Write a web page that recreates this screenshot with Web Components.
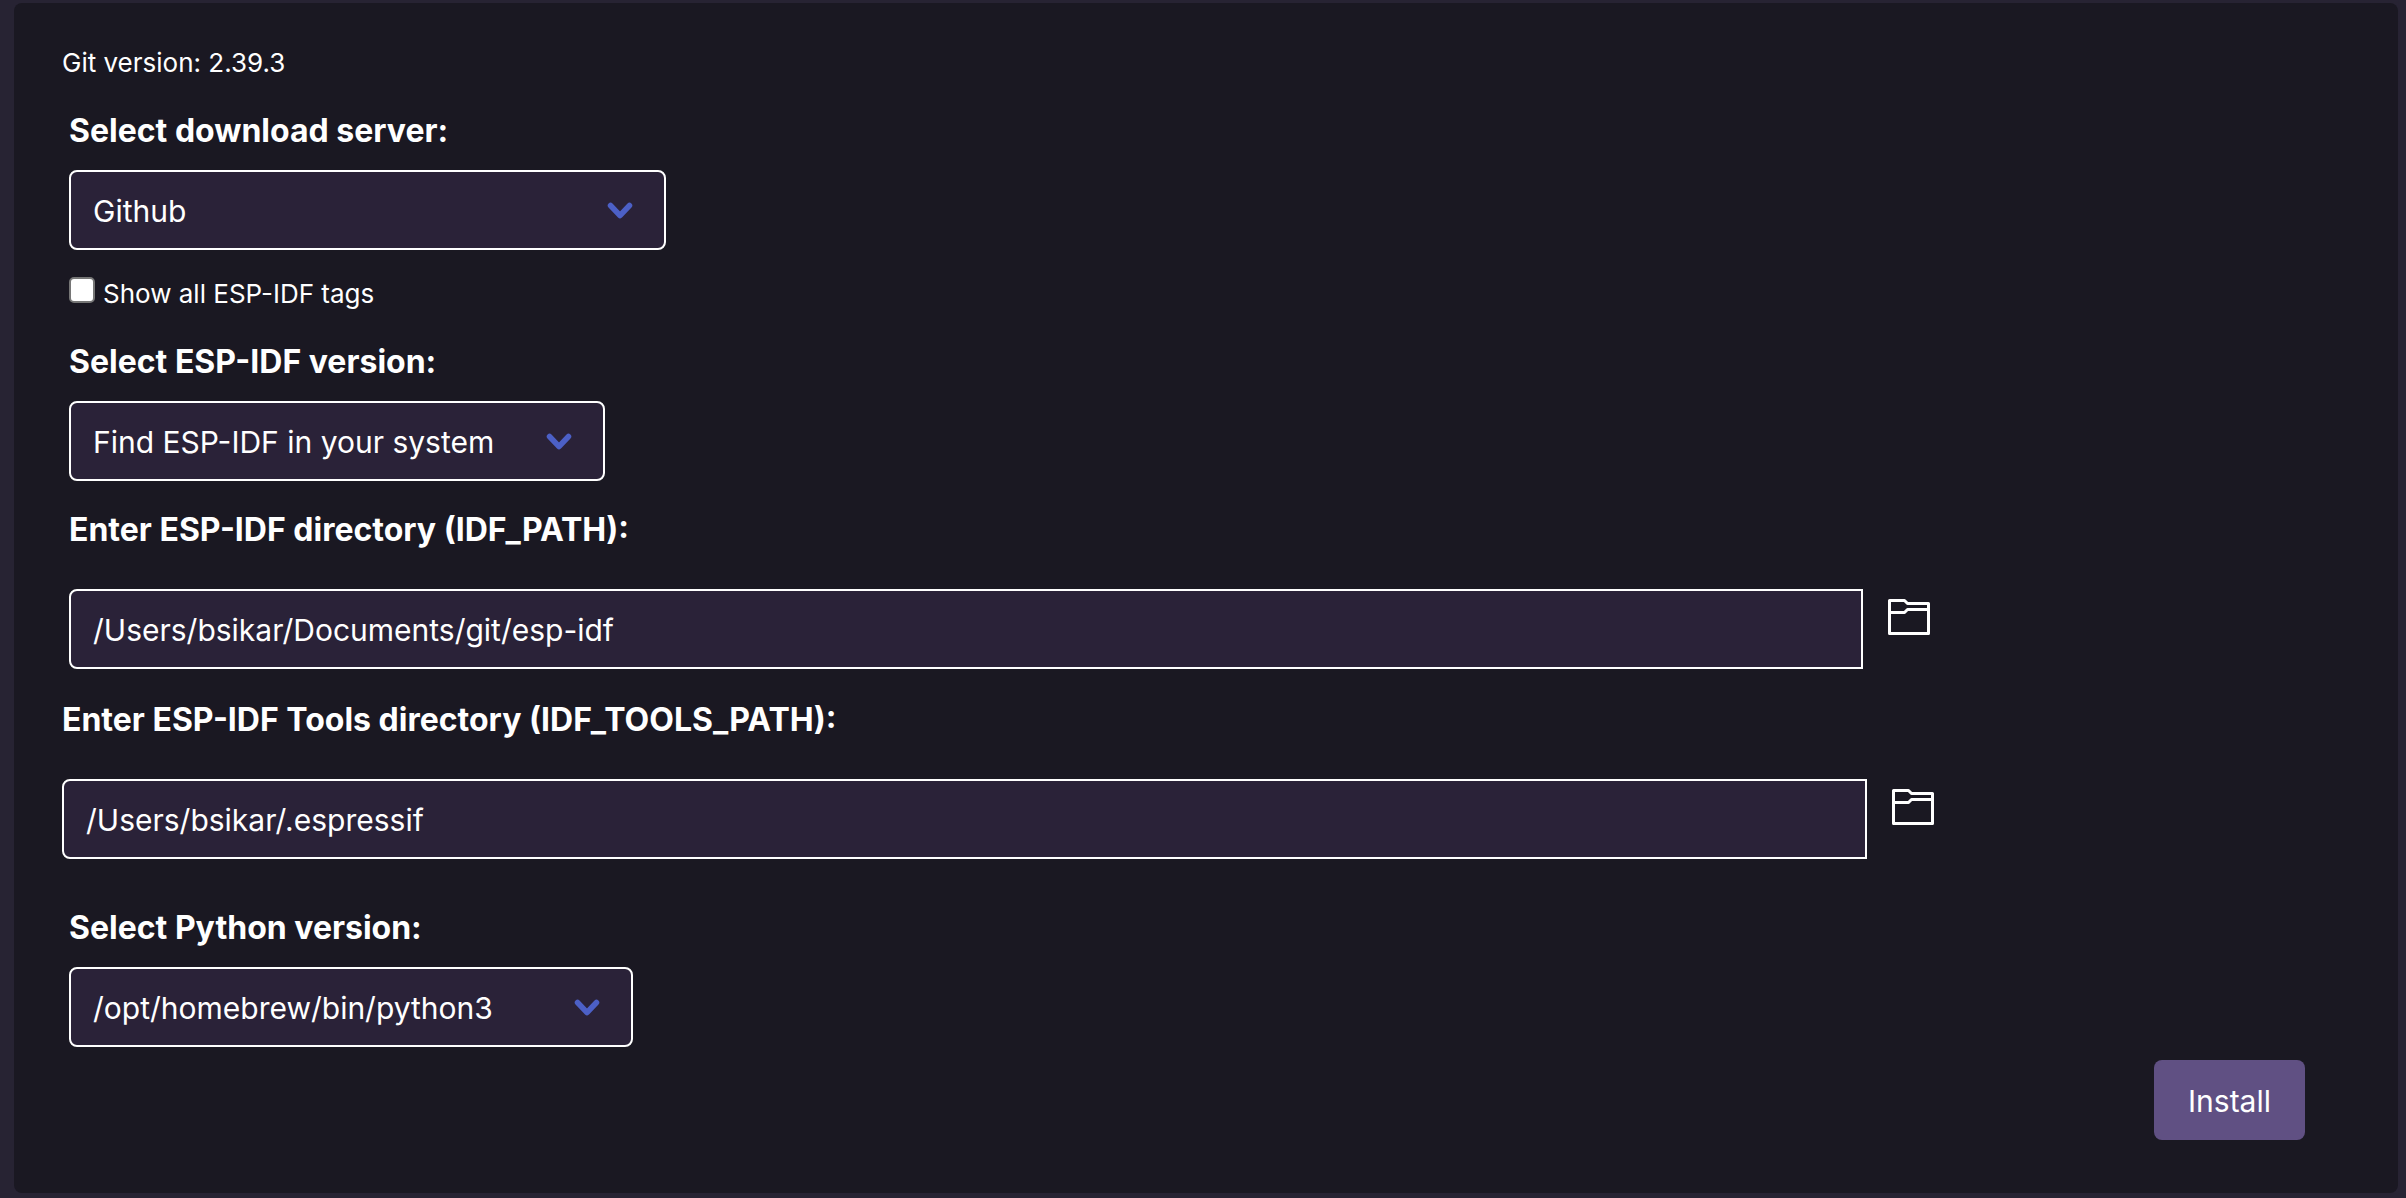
<!DOCTYPE html>
<html lang="en">
<head>
<meta charset="utf-8">
<title>ESP-IDF Setup</title>
<style>
  html { background: #272333; }
  body {
    margin: 0;
    font-family: Inter, "Noto Sans", sans-serif;
    font-size: 32px;
    line-height: 46px;
    color: #fff;
  }
</style>
</head>
<body>
<setup-panel></setup-panel>

<template id="panel-template">
  <style>
    :host { display: block; padding: 3px 8px 5px 14px; box-sizing: border-box; min-height: 100vh; }
    main {
      display: flex;
      flex-direction: column;
      min-height: calc(100vh - 8px);
      box-sizing: border-box;
      padding: 40px 48px 53px;
      border-radius: 8px;
      background: #1a1822;
    }
    .git { margin: 0 0 24px; font-size: 26px; line-height: 39px; }
    .inset { padding: 0 7px; margin-bottom: 24px; }
    .path { margin-bottom: 26px; }
    .wide { margin-bottom: 44px; }
    .last { margin-bottom: 13px; }
    .actions { display: flex; justify-content: flex-end; padding-right: 45px; }
  </style>
  <main>
    <p class="git">Git version: 2.39.3</p>
    <select-field class="inset" label="Select download server:" style="--width: 597px">
      <option>Github</option>
      <option>Espressif</option>
    </select-field>
    <check-field class="inset">Show all ESP-IDF tags</check-field>
    <select-field class="inset" label="Select ESP-IDF version:" style="--width: 536px">
      <option>Find ESP-IDF in your system</option>
    </select-field>
    <path-field class="inset path" label="Enter ESP-IDF directory (IDF_PATH):" value="/Users/bsikar/Documents/git/esp-idf"></path-field>
    <path-field class="wide" label="Enter ESP-IDF Tools directory (IDF_TOOLS_PATH):" value="/Users/bsikar/.espressif"></path-field>
    <select-field class="inset last" label="Select Python version:" style="--width: 564px">
      <option>/opt/homebrew/bin/python3</option>
    </select-field>
    <div class="actions"><action-button>Install</action-button></div>
  </main>
</template>

<template id="select-template">
  <style>
    :host { display: block; }
    label { display: block; padding-top: 2px; margin-bottom: 16px; font-weight: 700; }
    .control { position: relative; width: var(--width); max-width: 100%; }
    select {
      appearance: none;
      display: block;
      width: 100%;
      height: 80px;
      box-sizing: border-box;
      margin: 0;
      padding: 2px 80px 0 22px;
      border: 2px solid #fff;
      border-radius: 8px;
      background: #2a2238;
      color: inherit;
      font: inherit;
      font-size: 30px;
    }
    svg {
      position: absolute;
      right: 33px;
      top: 32px;
      width: 26px;
      height: 18px;
      pointer-events: none;
    }
  </style>
  <label for="field"></label>
  <div class="control">
    <select id="field"></select>
    <svg viewBox="0 0 26 18" fill="none" stroke="#4c60c6" stroke-width="5.500" stroke-linecap="round" stroke-linejoin="round" aria-hidden="true"><path d="M3.500 3.500L13 13.500L22.500 3.500"/></svg>
  </div>
</template>

<template id="check-template">
  <style>
    :host { display: block; }
    label { display: flex; align-items: flex-start; gap: 8px; font-size: 26px; line-height: 39px; }
    input {
      appearance: none;
      width: 26px;
      height: 26px;
      box-sizing: border-box;
      margin: 3px 0 0;
      border: 2px solid #767676;
      border-radius: 5px;
      background: #fff;
    }
    input:checked { background: #4c60c6; }
  </style>
  <label><input type="checkbox"><span><slot></slot></span></label>
</template>

<template id="path-template">
  <style>
    :host { display: block; }
    label { display: block; padding-top: 2px; margin-bottom: 36px; font-weight: 700; }
    .row { display: flex; align-items: flex-start; gap: 24px; }
    input {
      flex: 0 1 78.9%;
      min-width: 0;
      height: 80px;
      box-sizing: border-box;
      margin: 0;
      padding: 2px 22px 0;
      border: 2px solid #fff;
      border-radius: 8px 0 0 8px;
      background: #2a2238;
      color: inherit;
      font: inherit;
      font-size: 30px;
    }
    button {
      display: block;
      margin: 10px 0 0;
      padding: 0;
      border: 0;
      background: none;
      color: inherit;
      cursor: pointer;
    }
    svg { display: block; width: 44px; height: 36px; }
  </style>
  <label for="field"></label>
  <div class="row">
    <input id="field" type="text" spellcheck="false">
    <button type="button" aria-label="Browse">
      <svg viewBox="0 0 44 36" fill="none" stroke="currentColor" stroke-width="3" stroke-linejoin="round"><path d="M2.500 1.500H17.500L20.500 4.500H41.500V34.500H2.500ZM2.500 13.500H17.500L20.500 10.500H41.500"/></svg>
    </button>
  </div>
</template>

<template id="button-template">
  <style>
    :host { display: block; }
    button {
      display: block;
      height: 80px;
      padding: 2px 34px 0;
      border: 0;
      border-radius: 8px;
      background: #605083;
      color: inherit;
      font: inherit;
      font-size: 30px;
      cursor: pointer;
    }
  </style>
  <button type="button"><slot></slot></button>
</template>

<script>
  class TemplateElement extends HTMLElement {
    constructor() {
      super();
      const template = document.getElementById(this.constructor.template);
      this.attachShadow({ mode: "open" }).append(template.content.cloneNode(true));
    }
  }

  class SelectField extends TemplateElement {
    static template = "select-template";
    connectedCallback() {
      this.shadowRoot.querySelector("label").textContent = this.getAttribute("label");
      this.shadowRoot.querySelector("select").append(...this.querySelectorAll("option"));
    }
  }

  class CheckField extends TemplateElement {
    static template = "check-template";
  }

  class PathField extends TemplateElement {
    static template = "path-template";
    connectedCallback() {
      this.shadowRoot.querySelector("label").textContent = this.getAttribute("label");
      this.shadowRoot.querySelector("input").value = this.getAttribute("value");
    }
  }

  class ActionButton extends TemplateElement {
    static template = "button-template";
  }

  class SetupPanel extends TemplateElement {
    static template = "panel-template";
  }

  customElements.define("select-field", SelectField);
  customElements.define("check-field", CheckField);
  customElements.define("path-field", PathField);
  customElements.define("action-button", ActionButton);
  customElements.define("setup-panel", SetupPanel);
</script>
</body>
</html>
